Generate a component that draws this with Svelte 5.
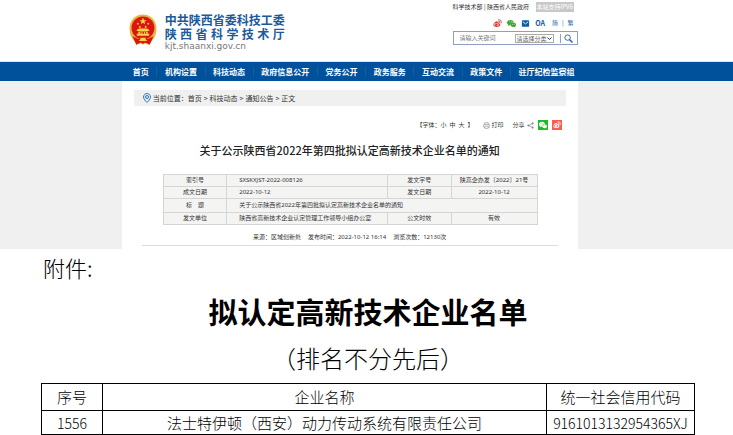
<script>
  let keyword = '';
  let category = '';

  const nav = ['首页', '机构设置', '科技动态', '政府信息公开', '党务公开', '政务服务', '互动交流', '政策文件', '驻厅纪检监察组'];
  const crumbs = ['首页', '科技动态', '通知公告', '正文'];
  const companies = [
    { no: '1556', name: '法士特伊顿（西安）动力传动系统有限责任公司', code: '9161013132954365XJ' }
  ];
</script>

{#snippet weibo()}
  <svg class="icon" viewBox="0 0 20 20" aria-hidden="true">
    <path fill="currentColor" fill-rule="evenodd" d="M8 5C10 4 11 6 10 8c3-1 5 0 4 2 3 1 3 4 0 6-4 3-12 2-13-2C0 11 4 6 8 5zM8 9c-4 0-6 2-5 5 2 3 9 2 10-1 0-2-2-4-5-4zM8 10c4 0 4 5-1 5-4 0-3-5 1-5z" />
    <path fill="none" stroke="currentColor" stroke-width="2" stroke-linecap="round" d="M12 2c5-1 8 3 6 7M13 5c2 0 3 1 2 3" />
  </svg>
{/snippet}

{#snippet wechat()}
  <svg class="icon" viewBox="0 0 20 20" aria-hidden="true">
    <path fill="currentColor" fill-rule="evenodd" d="M8 2C3 2 0 5 0 8c0 2 1 4 3 5l-1 3 3-2 3 .3C7 10 10 7 15 7 14 4 11 2 8 2zM5 5a1 1 0 1 1 0 2 1 1 0 0 1 0-2zM10 5a1 1 0 1 1 0 2 1 1 0 0 1 0-2z" />
    <path fill="currentColor" fill-rule="evenodd" d="M14 8c-4 0-6 2-6 5s3 5 6 5l2-.4 3 1.4-1-2c1-1 2-2 2-4 0-3-3-5-6-5zM12 10.500a1 1 0 1 1 0 2 1 1 0 0 1 0-2zM16 10.500a1 1 0 1 1 0 2 1 1 0 0 1 0-2z" />
  </svg>
{/snippet}

<div class="page" lang="zh-CN">
  <header>
    <div class="wrap head">
      <a class="brand" href="#home">
        <svg class="emblem" viewBox="0 0 54 60" aria-hidden="true">
          <path fill="#e9b53c" d="M27 0C12 0 1 11 1 27c0 11 4 20 11 25l2 7 9-3 4 2 4-2 9 3 2-7c7-5 11-14 11-25C53 11 42 0 27 0z" />
          <circle cx="27" cy="26" r="22" fill="#dc1414" />
          <path fill="#f8d34a" d="M27 6l2 5h5l-4 3 1 5-4-3-4 3 1-5-4-3h5zM15 17l3-1 1 3-3 1zM36 16l3 1-1 3-3-1zM19 23l3-1 1 3-3 1zM31 22l3 1-1 3-3-1z" />
          <path fill="#f8d34a" d="M15 30l4-3h16l4 3v2H15zM18 33h18v4h3v4H15v-4h3z" />
          <path fill="#dc1414" d="M22 34h2v3h-2zM26 34h3v3h-3zM31 34h2v3h-2zM7 42l10 5h20l10-5-3 8-4 8-9-4-4 3-4-3-9 4-4-8z" />
          <path fill="#f8d34a" d="M22 45h10v3l3 3H19l3-3z" />
        </svg>
        <span class="names">
          <strong>中共陕西省委科技工委</strong>
          <strong class="spread">陕西省科学技术厅</strong>
          <span class="domain">kjt.shaanxi.gov.cn</span>
        </span>
      </a>

      <div class="tools">
        <div class="links">
          <span><a href="#most">科学技术部</a> | <a href="#gov">陕西省人民政府</a></span>
          <span class="ipv6">本站支持IPV6</span>
        </div>
        <div class="social">
          <a class="red" href="#weibo" aria-label="微博">{@render weibo()}</a>
          <a class="green" href="#wechat" aria-label="微信">{@render wechat()}</a>
          <a class="blue" href="#mail" aria-label="邮箱">
            <svg class="icon" viewBox="0 0 20 20" aria-hidden="true">
              <rect x="2" y="3" width="16" height="14" rx="1" fill="currentColor" />
              <path d="M4 6l6 5 6-5" fill="none" stroke="#fff" stroke-width="2" />
            </svg>
          </a>
          <a class="oa" href="#oa">OA</a>
          <span class="lang"><a href="#jian">简</a><span>|</span><a href="#fan">繁</a></span>
        </div>
        <form class="search" on:submit|preventDefault>
          <input type="text" aria-label="关键词" placeholder="请输入关键词" bind:value={keyword} />
          <span class="pick">
            <select aria-label="分类" bind:value={category}>
              <option value="">请选择分类</option>
            </select>
            <svg viewBox="0 0 10 10" aria-hidden="true"><path d="M1 3l4 4 4-4" fill="none" stroke="#333" stroke-width="2" /></svg>
          </span>
          <button aria-label="搜索">
            <svg viewBox="0 0 20 20" aria-hidden="true">
              <circle cx="8" cy="8" r="6" fill="none" stroke="#2a5b9c" stroke-width="2" />
              <path d="M12 12l7 7" stroke="#2a5b9c" stroke-width="3" />
            </svg>
          </button>
        </form>
      </div>
    </div>
  </header>

  <nav>
    <div class="wrap menu">
      {#each nav as item, i}
        {#if i > 0}<span class="sep"></span>{/if}
        <a href="#nav{i}">{item}</a>
      {/each}
    </div>
  </nav>

  <div class="backdrop">
    <article class="wrap notice">
      <div class="crumbs">
        <svg viewBox="0 0 16 20" aria-hidden="true">
          <path d="M8 1C4 1 1 4 1 8c0 4 4 8 7 11 3-3 7-7 7-11 0-4-3-7-7-7z" fill="#dcebf7" stroke="#3f78b0" stroke-width="2" />
          <circle cx="8" cy="8" r="3" fill="none" stroke="#3f78b0" stroke-width="2" />
        </svg>
        <span>当前位置：</span>
        {#each crumbs as crumb, i}
          {#if i > 0}<span class="arrow">&gt;</span>{/if}
          <a href="#crumb{i}">{crumb}</a>
        {/each}
      </div>

      <div class="actions">
        <span class="sizes">【字体：<button>小</button><button>中</button><button>大</button>】</span>
        <button class="print">
          <svg class="icon" viewBox="0 0 20 20" aria-hidden="true">
            <path d="M5 7V2h10v5M5 15H2V7h16v8h-3M5 12h10v6H5z" fill="none" stroke="#999" stroke-width="2" />
          </svg>
          打印
        </button>
        <span class="share">
          分享
          <svg class="icon" viewBox="0 0 20 20" aria-hidden="true">
            <path d="M16 4L5 10l11 6" fill="none" stroke="#888" stroke-width="2" />
            <circle cx="16" cy="4" r="3" fill="#888" /><circle cx="4" cy="10" r="3" fill="#888" /><circle cx="16" cy="16" r="3" fill="#888" />
          </svg>
        </span>
        <a class="tile wx" href="#share-wechat" aria-label="分享到微信">{@render wechat()}</a>
        <a class="tile wb" href="#share-weibo" aria-label="分享到微博">{@render weibo()}</a>
      </div>

      <h1>关于公示陕西省2022年第四批拟认定高新技术企业名单的通知</h1>

      <table class="meta">
        <colgroup><col class="c1" /><col class="c2" /><col class="c3" /><col class="c4" /></colgroup>
        <tbody>
          <tr><th>索引号</th><td>SXSKXJST-2022-008126</td><th>发文字号</th><td class="mid">陕高企办发〔2022〕21号</td></tr>
          <tr><th>成文日期</th><td>2022-10-12</td><th>发文日期</th><td class="mid">2022-10-12</td></tr>
          <tr class="tall"><th>标&emsp;题</th><td colspan="3">关于公示陕西省2022年第四批拟认定高新技术企业名单的通知</td></tr>
          <tr><th>发文单位</th><td>陕西省高新技术企业认定管理工作领导小组办公室</td><th>公文时效</th><td class="mid">有效</td></tr>
        </tbody>
      </table>

      <div class="source">
        <span>来源：区域创新处</span>
        <span>发布时间：2022-10-12 16:14</span>
        <span>浏览次数：12130次</span>
      </div>
    </article>
  </div>

  <section class="annex">
    <p class="label">附件:</p>
    <h2>拟认定高新技术企业名单</h2>
    <p class="order">（排名不分先后）</p>
    <table class="list">
      <colgroup><col class="no" /><col /><col class="code" /></colgroup>
      <thead>
        <tr><th>序号</th><th>企业名称</th><th>统一社会信用代码</th></tr>
      </thead>
      <tbody>
        {#each companies as company}
          <tr><td class="num">{company.no}</td><td>{company.name}</td><td class="num">{company.code}</td></tr>
        {/each}
      </tbody>
    </table>
  </section>
</div>

<style>
  :global(body) {
    margin: 0;
    background: #fff;
  }
  .page {
    font-family: 'Noto Sans CJK SC', sans-serif;
    font-size: 6px;
    line-height: 10px;
    color: #333;
  }
  a { color: inherit; text-decoration: none; }
  button, input, select {
    font: inherit;
    color: inherit;
    padding: 0;
    margin: 0;
    border: 0;
    background: none;
  }
  svg { display: block; }
  h1, h2, p { margin: 0; }
  table { border-collapse: collapse; table-layout: fixed; }
  th { font-weight: inherit; }
  .wrap {
    box-sizing: border-box;
    width: 62.2%;
    margin-left: 16.6%;
  }
  .icon { width: 9px; height: 9px; }

  .head {
    display: flex;
    justify-content: space-between;
    height: 61px;
    padding-left: 7px;
  }
  header { border-bottom: 1px solid #dce5ee; }
  .brand {
    display: flex;
    align-items: flex-start;
    gap: 8px;
    padding-top: 13px;
  }
  .emblem { width: 28px; height: 32px; margin-top: 1px; }
  .names { display: flex; flex-direction: column; }
  .names strong {
    font-size: 12px;
    line-height: 14px;
    color: #1b5a9b;
  }
  .spread { text-align-last: justify; }
  .domain {
    font-family: 'DejaVu Sans', sans-serif;
    font-size: 9px;
    line-height: 11px;
    color: #777;
  }

  .tools { width: 125px; padding-top: 2px; }
  .links {
    display: flex;
    justify-content: space-between;
    padding-right: 4px;
  }
  .ipv6 {
    width: 38px;
    background: #c8c8c8;
    color: #fff;
    text-align: center;
  }
  .social {
    display: flex;
    justify-content: flex-end;
    align-items: center;
    gap: 5px;
    height: 10px;
    margin-top: 6px;
    padding-right: 4px;
  }
  .red { color: #e0332c; }
  .green { color: #3fa535; }
  .blue { color: #0f5aa5; }
  .oa { color: #0f5aa5; font-size: 7px; font-weight: bold; }
  .lang {
    display: flex;
    gap: 4px;
    margin-left: 2px;
    color: #0f5aa5;
  }
  .search {
    display: flex;
    align-items: center;
    height: 12px;
    margin-top: 3px;
    padding-left: 6px;
    border: 1px solid #8f9fc4;
  }
  .search input {
    flex: 1;
    min-width: 0;
    outline: none;
  }
  .search input::placeholder { color: #777; opacity: 1; }
  .pick {
    display: flex;
    align-items: center;
    width: 37px;
    height: 7px;
    border: 1px solid #aaa;
  }
  .pick select {
    appearance: none;
    flex: 1;
    min-width: 0;
    height: 7px;
    padding-left: 1px;
    line-height: 7px;
    color: #666;
  }
  .pick svg { width: 5px; height: 5px; margin-right: 1px; }
  .search button {
    margin-left: 6px;
    padding: 0 4px 0 3px;
    border-left: 1px solid #8f9fc4;
  }
  .search button svg { width: 9px; height: 9px; }

  nav { background: #00519b; }
  .menu {
    display: flex;
    justify-content: space-between;
    align-items: center;
    height: 19px;
    padding: 0 3px 0 11px;
    font-size: 8px;
    font-weight: bold;
    color: #fff;
  }
  .sep { width: 1px; height: 9px; background: #155fa3; }

  .backdrop { background: #f0f0f0; }
  .notice {
    padding: 9px 12px 3px;
    background: #fff;
  }
  .crumbs {
    display: flex;
    align-items: center;
    height: 16px;
    padding-left: 9px;
    background: #f0f0f0;
    font-size: 7px;
  }
  .crumbs svg { width: 8px; height: 10px; margin-right: 2px; }
  .arrow { margin: 0 2px; }

  .actions {
    display: flex;
    justify-content: flex-end;
    align-items: center;
    gap: 4px;
    margin-top: 14px;
    padding-right: 4px;
  }
  .sizes { display: flex; }
  .sizes button { margin-right: 3px; }
  .print, .share {
    display: flex;
    align-items: center;
    gap: 2px;
    margin-left: 5px;
  }
  .print .icon, .share .icon { width: 7px; height: 7px; }
  .tile {
    display: grid;
    place-items: center;
    width: 10px;
    height: 10px;
    color: #fff;
  }
  .tile .icon { width: 8px; height: 8px; }
  .wx { background: #1fb922; }
  .wb { background: #ff5c50; }

  h1 {
    margin-top: 12px;
    font-size: 11px;
    font-weight: 500;
    line-height: 16px;
    text-align: center;
    color: #222;
  }
  .meta {
    width: calc(100% - 57px);
    margin: 16px 0 0 29px;
    background: #f4f4f3;
  }
  .meta, .source { font-family: 'Noto Sans', 'Noto Sans CJK SC', sans-serif; }
  .meta th, .meta td {
    height: 11px;
    padding: 0;
    border: 1px solid #d5d5d5;
    line-height: 11px;
    white-space: nowrap;
  }
  .meta .tall th, .meta .tall td { height: 13px; }
  .meta td { padding-left: 12px; }
  .meta td.mid { padding-left: 0; text-align: center; }
  .c1, .c3 { width: 17%; }
  .c2 { width: 43%; }
  .c4 { width: 23%; }
  .source {
    display: flex;
    justify-content: center;
    gap: 7px;
    margin: 7px 8px 0;
    padding-bottom: 3px;
    border-bottom: 1px solid #ddd;
  }

  .annex {
    padding: 4px 38px 0 41px;
    color: #000;
  }
  .label {
    padding-left: 2px;
    font-size: 22px;
    font-weight: 300;
    line-height: 28px;
  }
  h2 {
    margin-top: 12px;
    font-size: 29px;
    line-height: 36px;
    text-align: center;
  }
  .order {
    margin-top: 15px;
    font-size: 24px;
    font-weight: 300;
    line-height: 28px;
    text-align: center;
  }
  .list {
    width: 100%;
    margin-top: 11px;
    font-size: 15px;
    font-weight: 300;
    line-height: 20px;
    text-align: center;
  }
  .list th, .list td {
    height: 23px;
    padding: 0;
    border: 1px solid #000;
  }
  .list th { height: 26px; }
  .list .num { font-size: 14px; }
  .no { width: 61px; }
  .code { width: 148px; }
</style>
